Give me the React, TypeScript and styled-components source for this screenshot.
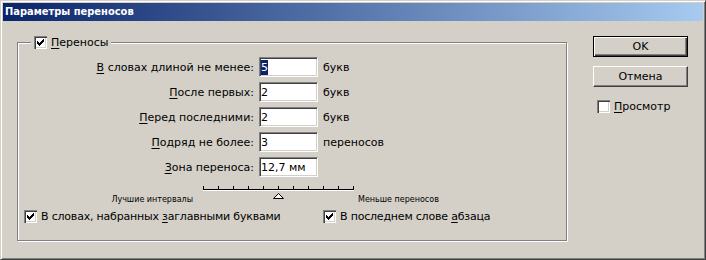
import React from 'react';
import styled, { createGlobalStyle, css } from 'styled-components';

const Global = createGlobalStyle`
  html, body { margin: 0; padding: 0; background: #d4d0c8; }
  body { font-family: "DejaVu Sans", sans-serif; font-size: 11px; color: #000; }
  #root { width: 706px; height: 260px; }
  u { text-decoration: underline; text-underline-offset: 2px; }
`;

const Window = styled.div`
  box-sizing: border-box;
  width: 706px;
  height: 260px;
  background: #d4d0c8;
  border: 1px solid;
  border-color: #d4d0c8 #404040 #404040 #d4d0c8;
  box-shadow: inset 1px 1px #fff, inset -1px -1px #808080;
  padding: 2px;
  display: flex;
  flex-direction: column;
`;

const TitleBar = styled.div`
  height: 18px;
  line-height: 18px;
  padding-left: 2px;
  background: linear-gradient(to right, #0a246a, #a6caf0);
  color: #fff;
  font-family: "DejaVu Sans Condensed", "DejaVu Sans", sans-serif;
  font-stretch: condensed;
  font-weight: bold;
  font-size: 11px;
  white-space: nowrap;
`;

const Body = styled.div`
  flex: 1;
  display: flex;
  align-items: flex-start;
  padding: 15px 0 0 14px;
`;

const GroupBox = styled.div`
  position: relative;
  box-sizing: border-box;
  width: 550px;
  height: 199px;
  margin-top: 6px;
  border: 1px solid #808080;
  box-shadow: inset 1px 1px #fff, 1px 1px #fff;
  padding: 14px 0 0 6px;
`;

const Legend = styled.div`
  position: absolute;
  left: 13px;
  top: -7px;
  padding: 0 3px;
  background: #d4d0c8;
`;

const CheckLabel = styled.label<{ $tight?: boolean }>`
  display: flex;
  align-items: center;
  gap: 4px;
  height: 13px;
  white-space: nowrap;
  line-height: 13px;
  letter-spacing: ${(p) => (p.$tight ? '-0.2px' : 'normal')};
`;

const Box = styled.span`
  display: block;
  width: 13px;
  height: 13px;
  flex: none;
  background: #fff;
  box-shadow: inset 1px 1px #808080, inset 2px 2px #404040, inset -1px -1px #fff,
    inset -2px -2px #d4d0c8;
  svg { display: block; }
`;

const FieldGrid = styled.div`
  display: grid;
  grid-template-columns: 230px 59px auto;
  column-gap: 5px;
  row-gap: 5px;
  align-items: center;
`;

const FieldLabel = styled.span`
  text-align: right;
  white-space: nowrap;
`;

const Unit = styled.span`
  white-space: nowrap;
`;

const Field = styled.div`
  box-sizing: border-box;
  width: 59px;
  height: 20px;
  background: #fff;
  border: 1px solid;
  border-color: #808080 #fff #fff #808080;
  box-shadow: inset 1px 1px #404040, inset -1px -1px #d4d0c8;
  padding: 0 1px;
  display: flex;
  align-items: center;
  white-space: nowrap;
`;

const Selected = styled.span`
  background: #0a246a;
  color: #fff;
  line-height: 15px;
`;

const SliderRow = styled.div`
  display: grid;
  grid-template-columns: 174px 160px auto;
  margin-top: 7px;
  align-items: start;
`;

const SliderLabel = styled.span<{ $right?: boolean }>`
  font-size: 8px;
  line-height: 10px;
  margin-top: 11px;
  white-space: nowrap;
  text-align: ${(p) => (p.$right ? 'left' : 'right')};
  padding-right: ${(p) => (p.$right ? '0' : '5px')};
`;

const BottomRow = styled.div`
  display: grid;
  grid-template-columns: 299px auto;
  margin-top: 5px;
`;

const ButtonColumn = styled.div`
  display: flex;
  flex-direction: column;
  gap: 9px;
  margin-left: 26px;
`;

const Button = styled.button<{ $default?: boolean }>`
  box-sizing: border-box;
  width: 95px;
  height: 21px;
  padding: 0;
  font: 11px "DejaVu Sans", sans-serif;
  color: #000;
  background: #d4d0c8;
  border: 1px solid;
  border-color: #fff #404040 #404040 #fff;
  box-shadow: inset -1px -1px #808080;
  ${(p) =>
    p.$default &&
    css`
      border-color: #000;
      box-shadow: inset 1px 1px #fff, inset -1px -1px #404040, inset -2px -2px #808080;
    `}
`;

const Preview = styled.div`
  margin: 4px 0 0 4px;
`;

const checkCols: [number, number][] = [
  [3, 5],
  [4, 6],
  [5, 7],
  [6, 6],
  [7, 5],
  [8, 4],
  [9, 3],
];

function Checkbox({ checked }: { checked?: boolean }) {
  return (
    <Box>
      {checked && (
        <svg width="13" height="13" viewBox="0 0 13 13" shapeRendering="crispEdges">
          {checkCols.map(([x, y]) => (
            <rect key={x} x={x} y={y} width="1" height="3" fill="#000" />
          ))}
        </svg>
      )}
    </Box>
  );
}

function Slider() {
  const ticks = Array.from({ length: 11 }, (_, i) => 5 + i * 15);
  return (
    <svg width="160" height="16" viewBox="0 0 160 16" shapeRendering="crispEdges">
      <rect x="5" y="5" width="151" height="1" fill="#000" />
      <rect x="5" y="6" width="151" height="1" fill="#fff" />
      {ticks.map((x) => (
        <rect key={x} x={x} y="2" width="1" height="3" fill="#000" />
      ))}
      <polygon
        points="75.5,14.5 80.5,9.5 85.5,14.5"
        fill="#fff"
        stroke="#000"
        strokeWidth="1"
        shapeRendering="auto"
      />
    </svg>
  );
}

const rows: { label: React.ReactNode; value: React.ReactNode; unit: string }[] = [
  {
    label: (
      <>
        <u>В</u> словах длиной не менее:
      </>
    ),
    value: <Selected>5</Selected>,
    unit: 'букв',
  },
  {
    label: (
      <>
        <u>П</u>осле первых:
      </>
    ),
    value: '2',
    unit: 'букв',
  },
  {
    label: (
      <>
        <u>П</u>еред последними:
      </>
    ),
    value: '2',
    unit: 'букв',
  },
  {
    label: (
      <>
        <u>П</u>одряд не более:
      </>
    ),
    value: '3',
    unit: 'переносов',
  },
  {
    label: (
      <>
        <u>З</u>она переноса:
      </>
    ),
    value: '12,7 мм',
    unit: '',
  },
];

export default function App() {
  return (
    <>
      <Global />
      <Window>
        <TitleBar>Параметры переносов</TitleBar>
        <Body>
          <GroupBox>
            <Legend>
              <CheckLabel>
                <Checkbox checked />
                <span>
                  <u>П</u>ереносы
                </span>
              </CheckLabel>
            </Legend>
            <FieldGrid>
              {rows.map((r, i) => (
                <React.Fragment key={i}>
                  <FieldLabel>{r.label}</FieldLabel>
                  <Field>{r.value}</Field>
                  <Unit>{r.unit}</Unit>
                </React.Fragment>
              ))}
            </FieldGrid>
            <SliderRow>
              <SliderLabel>Лучшие интервалы</SliderLabel>
              <Slider />
              <SliderLabel $right>Меньше переносов</SliderLabel>
            </SliderRow>
            <BottomRow>
              <CheckLabel $tight>
                <Checkbox checked />
                <span>
                  В словах, набранных <u>з</u>аглавными буквами
                </span>
              </CheckLabel>
              <CheckLabel $tight>
                <Checkbox checked />
                <span>
                  В последнем слове <u>а</u>бзаца
                </span>
              </CheckLabel>
            </BottomRow>
          </GroupBox>
          <ButtonColumn>
            <Button $default>OK</Button>
            <Button>Отмена</Button>
            <Preview>
              <CheckLabel>
                <Checkbox />
                <span>
                  <u>П</u>росмотр
                </span>
              </CheckLabel>
            </Preview>
          </ButtonColumn>
        </Body>
      </Window>
    </>
  );
}
